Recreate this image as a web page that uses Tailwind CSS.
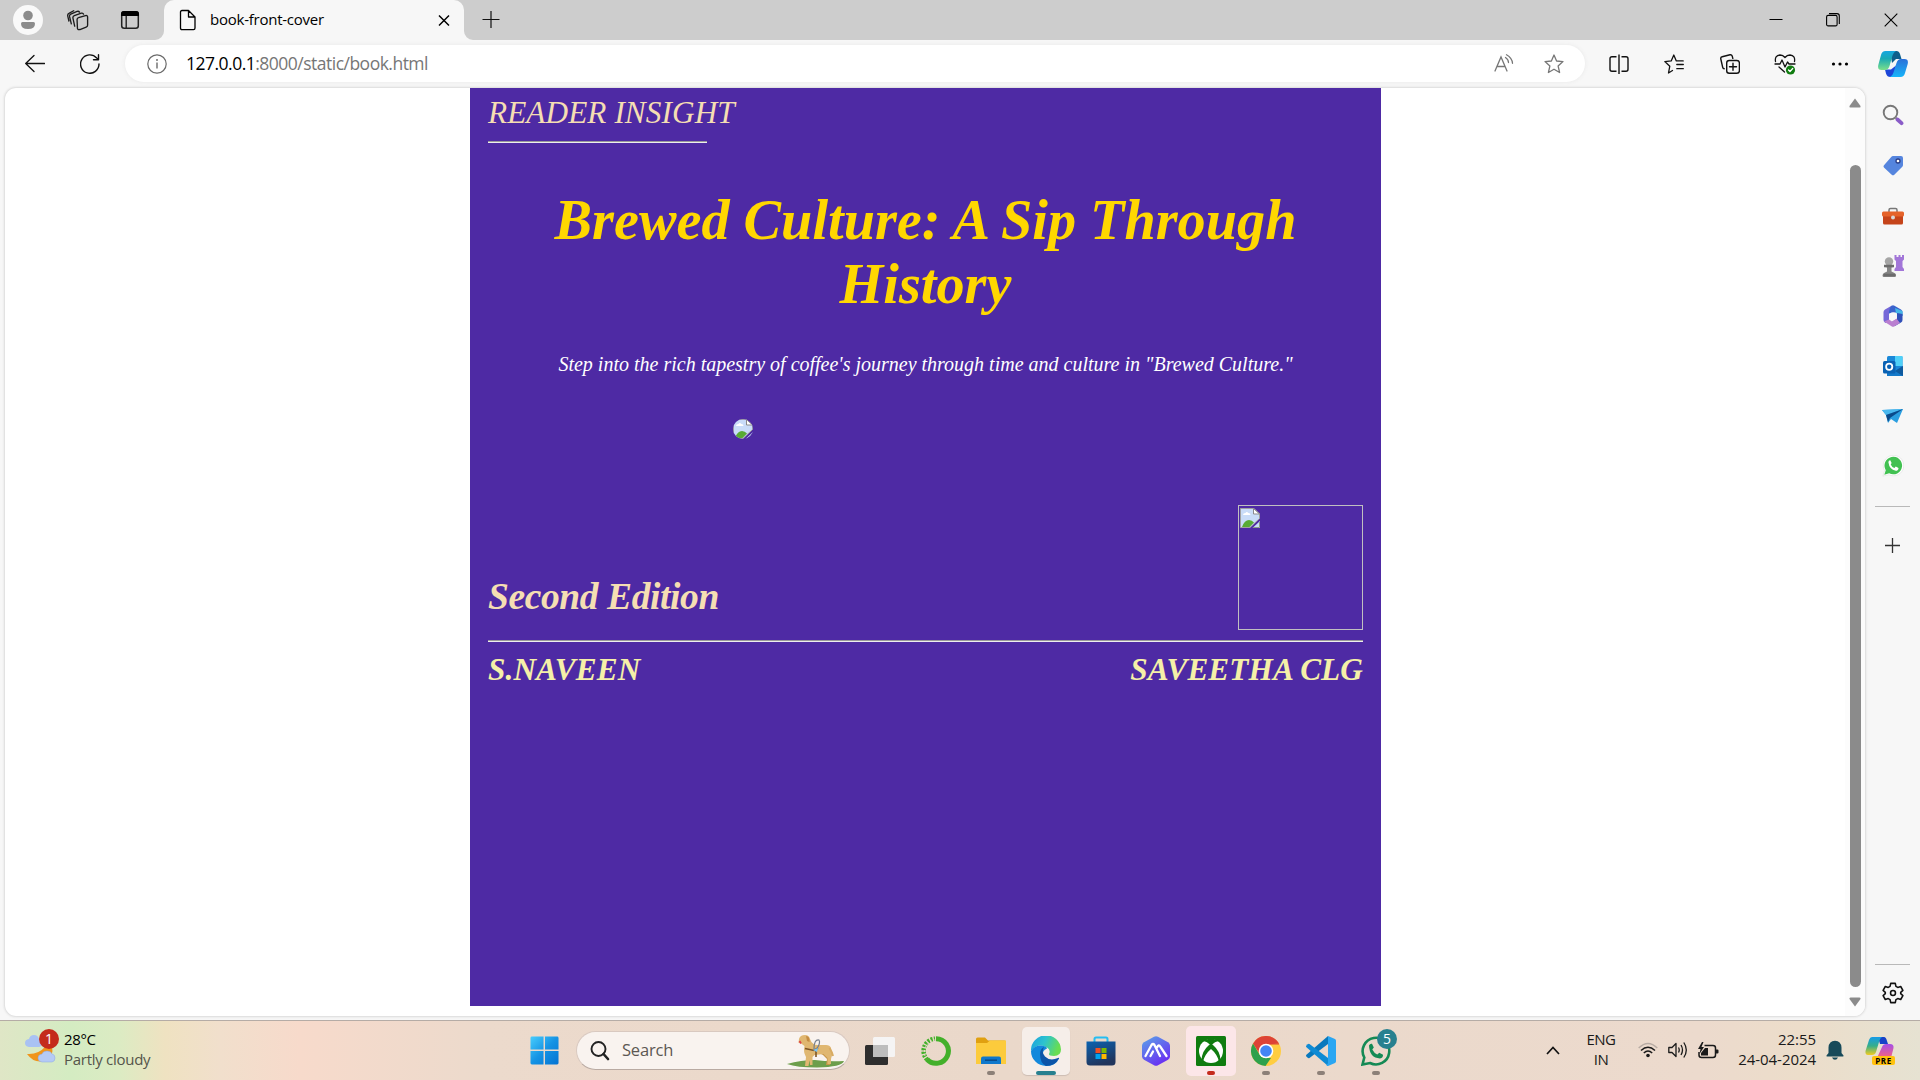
<!DOCTYPE html>
<html lang="en">
<head>
<meta charset="utf-8">
<title>book-front-cover</title>
<script src="https://cdn.jsdelivr.net/npm/@tailwindcss/browser@4"></script>
</head>
<body class="w-[1920px] h-[1080px] overflow-hidden bg-[#f7f7f7] flex flex-col font-['Open_Sans',sans-serif] text-black">

<!-- Broken image glyph shared by both missing pictures -->
<svg class="hidden">
  <symbol id="broken" viewBox="0 0 20 20">
    <path d="M0.500 0.500H14L19.500 6V10.500L10 19.500H0.500Z" fill="#c9dcf8" stroke="#a0a0a0"/>
    <path d="M3 7q0-2 2.500-2 1-2 3 0 2 0 2 2z" fill="#fff"/>
    <path d="M2 19q2.500-7 7-7 3 0 5 2.500l-4.500 4.500z" fill="#58ab34"/>
    <path d="M13.500 0.500V6H19.500Z" fill="#fff" stroke="#8b8b8b"/>
    <path d="M20 13V20H12.500Z" fill="#c9dcf8"/><path d="M13 19.500H19.500V14" fill="none" stroke="#8b9b8b"/>
  </symbol>
</svg>

<!-- Tab strip -->
<div class="h-10 bg-[#cdcdcd] flex items-end shrink-0">
  <div class="w-[164px] h-10 flex items-center">
    <svg class="ml-[13px]" width="30" height="30" viewBox="0 0 30 30"><circle cx="15" cy="15" r="15" fill="#f9f9f9"/><circle cx="15" cy="10.500" r="4.800" fill="#8c8c8c"/><path d="M8 18.500q0-1.500 1.500-1.500h11q1.500 0 1.500 1.500 0 5.500-7 5.500t-7-5.500z" fill="#8c8c8c"/></svg>
    <svg class="ml-[24px]" width="23" height="23" viewBox="0 0 24 24" fill="none" stroke="#1c1c1c" stroke-width="1.400" stroke-linejoin="round" stroke-linecap="round"><path d="M10.500 11q0-1.500 1.500-1.900l7.300-2.200q2.200-.5 2.200 1.500v8.500q0 1.500-1.500 2l-6.500 2.500q-2.200.7-2.600-1.200z"/><path d="M8 17.800 6.200 9.500q-.3-1.900 1.400-2.500l7.400-2.600q1.700-.5 2.300 1M4.500 15.500 2.700 8Q2.300 6 4 5.300L10.500 2.500q1.700-.6 2.500.8M2 12.500.8 7.500Q.4 5.300 2 4.500L7 1.800"/></svg>
    <svg class="ml-[29px]" width="22" height="22" viewBox="0 0 22 22"><rect x="2.700" y="2.700" width="16.600" height="16.600" rx="2.500" fill="none" stroke="#222" stroke-width="1.500"/><path d="M2 7V5q0-3 3-3h12q3 0 3 3v2z"/><path d="M7.200 7v12" stroke="#222" stroke-width="1.400"/></svg>
  </div>
  <div class="relative w-[300px] h-10 bg-[#f7f7f7] rounded-t-[10px] flex items-center">
    <svg class="absolute bottom-0 -left-[9px]" width="9" height="9"><path d="M9 0A9 9 0 0 1 0 9H9Z" fill="#f7f7f7"/></svg>
    <svg class="absolute bottom-0 -right-[9px]" width="9" height="9"><path d="M0 0A9 9 0 0 0 9 9H0Z" fill="#f7f7f7"/></svg>
    <svg class="ml-[15px]" width="18" height="22" viewBox="0 0 18 22" fill="none" stroke="#000" stroke-width="1.300" stroke-linejoin="round"><path d="M3 1.500h6.500L16 8v11q0 1.700-1.500 1.700H3Q1.500 20.700 1.500 19V3Q1.500 1.500 3 1.500zM9.500 1.500V8H16"/></svg>
    <span class="ml-[13px] mb-[2px] w-[220px] text-[15px] tracking-[-0.24px] leading-none">book-front-cover</span>
    <svg class="ml-[7px]" width="14" height="14" viewBox="0 0 14 14" stroke="#000" stroke-width="1.500"><path d="M2 2.500l10 10M12 2.500 2 12.500"/></svg>
  </div>
  <div class="h-10 flex items-center pl-[18px]">
    <svg width="18" height="18" viewBox="0 0 18 18" stroke="#111" stroke-width="1.200"><path d="M0.500 8.500h17M9 0v17"/></svg>
  </div>
  <div class="ml-auto h-10 flex items-center">
    <div class="w-[57px] flex justify-center"><svg width="14" height="14" stroke="#000" stroke-width="1"><path d="M0.500 6.500h13"/></svg></div>
    <div class="w-[58px] flex justify-center"><svg width="14" height="14" viewBox="0 0 14 14" fill="none" stroke="#000" stroke-width="1.100"><rect x=".6" y="2.400" width="10.500" height="10.500" rx="1.500"/><path d="M3 .6h8q2.300 0 2.300 2.300V11"/></svg></div>
    <div class="w-[58px] flex justify-center"><svg width="14" height="14" viewBox="0 0 14 14" stroke="#000" stroke-width="1.100"><path d="M.7.700l12.600 12.600M13.300.700.7 13.300"/></svg></div>
  </div>
</div>

<!-- Address bar row -->
<div class="h-12 flex items-center shrink-0 pb-px">
  <div class="w-[125px] flex items-center gap-[35px] pl-[25px]">
    <svg width="20" height="20" viewBox="0 0 20 20" fill="none" stroke="#111" stroke-width="1.300" stroke-linecap="round" stroke-linejoin="round"><path d="M19.500 9.500H.7M9 1.500.7 9.500 9 17.500"/></svg>
    <svg width="20" height="20" viewBox="0 0 20 20" fill="none" stroke="#111" stroke-width="1.400" stroke-linecap="round" stroke-linejoin="round"><path d="M19 10a9.200 9.200 0 1 1-2.300-6L18.500 5.500M18.500.700v5H13.500"/></svg>
  </div>
  <div class="w-[1460px] h-[37px] bg-white rounded-full flex items-center shadow-[0_0_4px_#e8e8e8]">
    <svg class="ml-[22px]" width="20" height="20" viewBox="0 0 20 20" fill="none" stroke="#6a6a6a" stroke-width="1.200"><circle cx="10" cy="10" r="9.200"/><path d="M10 8.500v6" stroke-width="1.400"/><circle cx="10" cy="6" r=".4"/></svg>
    <span class="ml-[19px] text-[17.5px] leading-none tracking-[-0.51px]">127.0.0.1<span class="text-[#767676]">:8000/static/book.html</span></span>
    <svg class="ml-auto" width="20" height="20" viewBox="0 0 20 20" fill="none" stroke="#767676" stroke-width="1.300" stroke-linecap="round"><path d="M1 17 7 3l6 14M3 12.500h8M11.500 3.500q3 2 3 5M12.500.800q5.500 3 6 8.500"/></svg>
    <svg class="ml-[30px] mr-[21px]" width="20" height="20" viewBox="0 0 20 20" fill="none" stroke="#767676" stroke-width="1.300" stroke-linejoin="round"><path d="M10 1l2.600 6 6.400.600-4.900 4.300 1.500 6.600L10 15.200l-5.600 3.300 1.500-6.600L1 7.600 7.400 7z"/></svg>
  </div>
  <div class="flex items-center ml-[6px]">
    <div class="w-[55px] flex justify-center"><svg width="20" height="20" viewBox="0 0 20 20" fill="none" stroke="#111" stroke-width="1.400"><path d="M7.500 2.700H3q-2 0-2 2v10.600q0 2 2 2h4.500M12.500 2.700H17q2 0 2 2v10.600q0 2-2 2h-4.500M10 .5v19.500"/></svg></div>
    <div class="w-[56px] flex justify-center"><svg width="20" height="20" viewBox="0 0 20 20" fill="none" stroke="#111" stroke-width="1.300" stroke-linejoin="round" stroke-linecap="round"><path d="M8.500 16.500 4.500 19l1.300-6.800L.8 7.600l6.400-.700L9.800 1l2.500 5.900h6.900M12.800 10.500h6.500M12.800 14.700h6.500"/></svg></div>
    <div class="w-[55px] flex justify-center"><svg width="20" height="20" viewBox="0 0 20 20" fill="none" stroke="#111" stroke-width="1.400" stroke-linejoin="round" stroke-linecap="round"><path d="M4.200 14.700q-1.200 0-1.500-1.300L.8 5Q.4 3.200 2.200 2.700L10 .8q1.700-.3 2.300 1.500l.5 2"/><rect x="6.700" y="6.500" width="12.700" height="12.700" rx="2.500"/><path d="M13 9.300v7M9.500 12.800h7"/></svg></div>
    <div class="w-[55px] flex justify-center"><svg width="22" height="22" viewBox="0 0 22 22" fill="none" stroke="#111" stroke-width="1.300" stroke-linejoin="round" stroke-linecap="round"><path d="M1.500 8.500Q.5 2.500 6 2q3 0 5 2.500Q13 2 16 2q5.500.5 4.500 6.500M1 11h5l2-4 3 7 2.500-5 1.500 2h6M5 14l5.500 5"/><circle cx="16.500" cy="17" r="4.600" fill="#107c10" stroke="none"/><path d="M14.500 17l1.500 1.500 2.700-3" stroke="#fff"/></svg></div>
    <div class="w-[55px] flex justify-center"><svg width="18" height="6"><circle cx="2.500" cy="3" r="1.600"/><circle cx="9" cy="3" r="1.600"/><circle cx="15.500" cy="3" r="1.600"/></svg></div>
    <div class="w-[52px] flex justify-center"><svg width="30" height="26" viewBox="0 0 30 26">
      <defs><linearGradient id="cA" x1="0" y1="0" x2="0" y2="1"><stop offset="0" stop-color="#15a6e0"/><stop offset=".4" stop-color="#19a9b5"/><stop offset="1" stop-color="#7be08a"/></linearGradient><linearGradient id="cB" x1="0" y1="0" x2="0" y2="1"><stop offset="0" stop-color="#2b70d8"/><stop offset="1" stop-color="#18b5fa"/></linearGradient></defs>
      <path d="M12 0h6.500Q21 0 22 3l1.500 5H18l-4 4z" fill="#0d5f8c"/>
      <path d="M7 18.500h6l5-4-2 11.500h-3.500Q9 26 8 22.500z" fill="#1d46d8"/>
      <path d="M7.500 0H18q-2.500 1-3.500 4.500L11.500 15q-1.200 4-4.500 4H3.500Q-.8 19 .3 14L3 4Q4 0 7.500 0z" fill="url(#cA)"/>
      <path d="M22.500 26H12q2.500-1 3.500-4.500L18.500 12q1.200-4 4.500-4h3.500q4.300 0 3.200 5L27 22q-1 4-4.500 4z" fill="url(#cB)"/></svg></div>
  </div>
</div>

<!-- Page area, scrollbar and side bar -->
<div class="h-[932px] flex shrink-0">
  <div class="ml-[5px] w-[1860px] h-[928px] bg-white rounded-[11px] overflow-hidden flex shadow-[0_0_3px_#bbb]">
    <main class="ml-[465px] w-[911px] h-[918px] bg-[#4e2aa4] px-[18px] font-['Liberation_Serif',serif] italic">
      <div class="h-[53px] pt-[7px] text-[31.25px] leading-[36px] tracking-[0.08px] text-[#f5deb3] whitespace-nowrap">READER INSIGHT</div>
      <div class="w-[219px] h-[2px] border-t border-t-[#9a9a9a] border-b border-b-[#eee]"></div>
      <h1 class="mt-[45px] text-center font-bold text-[56.25px] leading-[64px] text-[#ffd700]">Brewed Culture: A Sip Through<br>History</h1>
      <p class="mt-[36px] text-center text-[20px] leading-[24px] text-white whitespace-nowrap">Step into the rich tapestry of coffee's journey through time and culture in "Brewed Culture."</p>
      <div class="h-[85px] pt-[43px] pl-[245px]"><svg class="rounded-full" width="20" height="20"><use href="#broken"/></svg></div>
      <div class="h-[128px] mt-[44px] flex justify-between items-start">
        <h2 class="mt-[70px] font-bold text-[37.5px] leading-[43px] tracking-[-0.4px] text-[#f5deb3]">Second Edition</h2>
        <div class="w-[125px] h-[125px] border border-[#c0c0c0] px-px pt-[2px]"><svg width="20" height="20"><use href="#broken"/></svg></div>
      </div>
      <div class="mt-[7px] h-[2px] border-t border-t-[#9a9a9a] border-b border-b-[#eee]"></div>
      <div class="mt-[10px] flex justify-between font-bold text-[31.25px] leading-[36px] tracking-[0.12px] text-[#f5f0a8]"><span>S.NAVEEN</span><span>SAVEETHA CLG</span></div>
    </main>
    <div class="ml-auto w-[20px] bg-[#fcfcfc] flex flex-col items-center pt-[10px] pb-[9px]">
      <svg width="12" height="10"><path d="M6 .5 11.500 8q.5 1.500-1 1.500H1.500Q0 9.500.5 8Z" fill="#8b8b8b"/></svg>
      <div class="mt-[57px] w-[11px] h-[822px] rounded-full bg-[#8b8b8b]"></div>
      <svg class="mt-[10px]" width="12" height="10"><path d="M6 9.500 .5 2Q0 .5 1.500.5h9q1.500 0 1 1.500Z" fill="#8b8b8b"/></svg>
    </div>
  </div>
  <aside class="w-[55px] h-[932px] flex flex-col items-center pt-[2px]">
    <div class="h-[50px] flex items-center"><svg width="22" height="22" viewBox="0 0 22 22" fill="none"><circle cx="8.500" cy="8.500" r="6.800" stroke="#777" stroke-width="1.900"/><path d="M13.200 13.200l2 2" stroke="#888" stroke-width="2"/><path d="M15.500 15.500l4 3.700" stroke="#8a5cc8" stroke-width="3.800" stroke-linecap="round"/></svg></div>
    <div class="h-[51px] flex items-center"><svg width="20" height="22" viewBox="0 0 20 22"><path d="M10 1h8q2 0 2 2v7q0 1-.7 1.700l-8 8q-1.300 1.300-2.600 0l-7.500-7q-1.400-1.400 0-2.700l7-8Q9 1 10 1z" fill="#5585de"/><circle cx="15" cy="6" r="2" fill="#fff" stroke="#2c3e86" stroke-width="1.300"/></svg></div>
    <div class="h-[50px] flex items-center"><svg width="22" height="18" viewBox="0 0 22 18"><path d="M7 5V3q0-1.500 1.500-1.500h5Q15 1.500 15 3v2" fill="none" stroke="#777" stroke-width="1.500"/><rect x="1" y="7" width="20" height="10.500" rx="1.500" fill="#c5441a"/><rect x="0" y="4.500" width="22" height="5" rx="1.500" fill="#e5632a"/><circle cx="11" cy="10.500" r="2" fill="#d8d8d8"/></svg></div>
    <div class="h-[50px] flex items-center"><svg width="22" height="24" viewBox="0 0 22 24"><path d="M12.500 1h2v2h2V1h2v2h1.500V1H22v4.500l-1.500 1.500v6l1.500 2v2H12.500v-2L14 13V7l-1.500-1.500z" fill="#a276d8"/><circle cx="7" cy="7.500" r="4.200" fill="#a5a5a5"/><path d="M3 11h8.500v2l-2 .500v4l3 1.500q1.500 1 1.500 2.500t-1.500 1.500H2Q.5 23 .5 21.500T2 19l3-1.500v-4l-2-.5z" fill="#858585"/><path d="M2 12h10M1.500 21h12" stroke="#6c6c6c" stroke-width="2.300"/></svg></div>
    <div class="h-[50px] flex items-center"><svg width="20" height="22" viewBox="0 0 20 22"><path d="M8.500.8 2 4.500Q.5 5.500.5 7v8q0 2 2 3l3.500-2V8l7-4z" fill="#7568d8"/><path d="M8.500.8q1.500-1 3 0L18 4.500q1.500 1 1.500 2.500v4L13 7.500 6 8.500q-.5-5 2.500-7.700z" fill="#3a63cc"/><path d="M12 3l7.500 3v5L13 8z" fill="#45b8e8"/><path d="M19.500 9v6q0 1.500-1.500 2.500l-6.500 3.700L9 17l5-3V8z" fill="#3150b8"/><path d="M1 16.500l7.500 4.700q1.500 1 3 0L17 18l-3.500-4.500-4.500 3-3-2z" fill="#ba7fd0"/><circle cx="10" cy="11" r="3.700" fill="#f7f7f7"/></svg></div>
    <div class="h-[50px] flex items-center"><svg width="20" height="20" viewBox="0 0 20 20"><rect x="4" y="0" width="15.500" height="16" rx="1.500" fill="#1a88d8"/><path d="M12 0h7.500v10H12z" fill="#4fd0f8"/><path d="M4 20V10l8 5 8-5v10z" fill="#1479c9"/><path d="M20 10v10l-8-5z" fill="#0e5a9e"/><rect x="0" y="5" width="12.500" height="12.500" rx="1.500" fill="#0a62b4"/><circle cx="6.200" cy="10.700" r="3.100" fill="none" stroke="#fff" stroke-width="1.800"/></svg></div>
    <div class="h-[50px] flex items-center"><svg width="21" height="16" viewBox="0 0 21 16"><path d="M0 2 21 1 15 15 9 11l-3 4-2-8z" fill="#2a9ee0"/><path d="M21 1 4 7 0 2z" fill="#4ab8ee"/><path d="M4 7 21 1 8 10l-2 4z" fill="#0b4a8a"/></svg></div>
    <div class="h-[50px] flex items-center"><svg width="22" height="22" viewBox="0 0 24 24"><path d="M1 23l1.800-6A11.200 11.200 0 1 1 7.500 21.500z" fill="#fff" stroke="#ddd" stroke-width=".6"/><path d="M2.500 21.500l1.600-5A9.600 9.600 0 1 1 7.800 20z" fill="#42c152"/><path d="M7 8q0-2 2-2.200l1.500 3-1 1.500q1.200 2.800 4 4l1.500-1.700 3 1.500q0 3-3 3.200Q8 16 7 8z" fill="#fff"/></svg></div>
    <div class="mt-[15px] w-[35px] h-px bg-[#b9b9b9]"></div>
    <svg class="mt-[31px]" width="15" height="15" stroke="#333" stroke-width="1.300"><path d="M0 7.500h15M7.500 0v15"/></svg>
    <div class="mt-auto w-[35px] h-px bg-[#b9b9b9]"></div>
    <svg class="mt-[17px] mb-[16px]" width="22" height="22" viewBox="0 0 24 24" fill="none" stroke="#111" stroke-width="1.700" stroke-linejoin="round"><circle cx="12" cy="12" r="2.700"/><path d="M9.500 1.500h5l.7 3.200 2 1.200 3.200-1 2.400 4.200-2.400 2.200v1.400l2.400 2.200-2.400 4.200-3.200-1-2 1.200-.7 3.200h-5l-.7-3.200-2-1.200-3.200 1-2.400-4.200 2.400-2.200v-1.400L1.200 9.100l2.400-4.200 3.200 1 2-1.200z"/></svg>
  </aside>
</div>

<!-- Taskbar -->
<div class="h-[60px] shrink-0 border-t border-[#b5aca6] flex items-center bg-[linear-gradient(90deg,#dfe6c6_0px,#d4ecc2_70px,#dcebc3_120px,#efe2c1_165px,#f1dfcc_220px,#f7dacb_300px,#ecdacc_480px,#ead8ca_1000px,#ecdacd_1700px,#ecddca_1800px,#e6e2d2_1920px)]">
  <div class="w-[529px] flex items-center pb-[3px]">
    <div class="relative ml-[25px] w-[39px] h-[40px]">
      <svg width="34" height="40" viewBox="0 0 34 40"><path d="M2 25q11 1 19-8l6 1q2 8-5 13-12 5-20-6z" fill="#f0951c"/><path d="M4 18q-4-.5-4-4t4-4q1-4 5-4t5 4q3 .5 3 4t-3 4z" fill="#a9c2f3"/><path d="M17 33q-4-.5-4-4t4-4q1-3 5-3t5 3q3 .5 3 4t-3 4z" fill="#b5caf5" stroke="#8ba9e5" stroke-width=".5"/></svg>
      <span class="absolute left-[14px] top-0 w-5 h-5 rounded-full bg-[#c42b1c] text-white text-[14px] leading-5 text-center">1</span>
    </div>
    <div class="leading-5 tracking-[-0.35px] text-[15px]"><div>28°C</div><div class="text-[#55554b] tracking-[-0.28px]">Partly cloudy</div></div>
  </div>
  <svg class="ml-px" width="29" height="29" viewBox="0 0 30 30"><defs><linearGradient id="w" x1="0" y1="0" x2="1" y2="1"><stop offset="0" stop-color="#48cdfd"/><stop offset=".5" stop-color="#1593e4"/><stop offset="1" stop-color="#0473d2"/></linearGradient></defs><path d="M2 .5H14V14H.5V2Q.5.500 2 .5zM15.500.500H28q1.500 0 1.500 1.500V14h-14zM.5 15.500H14v14H2Q.5 29.500.5 28zM15.500 15.500h14V28q0 1.500-1.500 1.500H15.500z" fill="url(#w)"/></svg>
  <div class="ml-[17px] w-[274px] h-[39px] rounded-full bg-[#f9f3ef] border border-[#d9c9c0] border-b-[#b9aaa2] flex items-center">
    <svg class="ml-[13px]" width="20" height="20" viewBox="0 0 20 20" fill="none" stroke="#222"><circle cx="8.500" cy="8" r="7" stroke-width="1.900"/><path d="M13.500 13l4.500 5" stroke-width="2.600" stroke-linecap="round"/></svg>
    <span class="ml-[12px] text-[16.5px] tracking-[-0.2px] text-[#5d5853]">Search</span>
    <svg class="ml-auto mr-[5px]" width="57" height="36" viewBox="0 0 57 36"><path d="M0 31q14-4 28-4 14 2 29 1-2 6-27 6.500Q10 34.500 0 31z" fill="#6d9e4b"/><path d="M32 20l7-6 6 6-2 12h-4l1-6-4-4z" fill="#c89648"/><path d="M12 6q1-4 6-4 4 0 5 4 2 6 8 6l8 0q4 0 5 3l1 6-1 3 0 7h-3.500v-6l-4-4-9 1-2 2v8h-2.500l-.5-5-1 6h-3.500l1-9q-3-5-1.500-11l-4-3h-2z" fill="#e0b771"/><path d="M19 3q4 0 3.500 6l-2.500-1z" fill="#c48c42"/><path d="M42.500 15q3 5 3.500 8" stroke="#d8ab62" stroke-width="2" fill="none"/><path d="M12.500 8l1.500 2.500" stroke="#e0434a" stroke-width="1.800"/><path d="M18 15.500l9 2 4-2.500M29 16v8" stroke="#7d5526" stroke-width="1.600" fill="none"/><path d="M27 16q0-10 5-9 2 3-3 10z" fill="none" stroke="#777f8c" stroke-width="1.200"/><path d="M26 17l5-2-1 4z" fill="#79c4f5"/></svg>
  </div>
  <div class="ml-[2px] flex items-center h-[60px]">
    <div class="w-[56px] flex justify-center"><svg width="32" height="30" viewBox="0 0 32 30"><rect x="1" y="9" width="23" height="20" rx="1.500" fill="#2e2e2e"/><rect x="9" y="1" width="22" height="20" rx="1.500" fill="#f6f6f6" fill-opacity=".95"/><path d="M9 9h15v12H9z" fill="#bdbdbd"/></svg></div>
    <div class="w-[55px] flex justify-center"><svg width="30" height="30" viewBox="0 0 30 30" fill="none" stroke="#43b02a"><path d="M15 2.700A12.300 12.300 0 1 1 6 23.300" stroke-width="5"/><path d="M6 23.500A12.300 12.300 0 0 1 14 2.700" stroke-width="4.500" stroke-dasharray="2 1.300"/><path d="M4 20A12.300 12.300 0 0 1 14 4" stroke="#ecdacc" stroke-width="1" stroke-dasharray="2 2"/></svg></div>
    <div class="relative w-[55px] h-[60px] flex justify-center items-center"><svg width="30" height="28" viewBox="0 0 30 28"><path d="M0 2Q0 .500 1.500.500H9L12 3.500H28.500q1.500 0 1.500 1.500V8H0z" fill="#e0a010"/><path d="M0 6h11l3-2.500h16V27H0z" fill="#fccb3c"/><path d="M5 27v-5.500Q5 19.500 7 19.500H23q2 0 2 2V27z" fill="#0f78cc"/><path d="M9 23.200h12" stroke="#0a4a88" stroke-width="1.500"/></svg><span class="absolute bottom-[6px] w-2 h-1 rounded-full bg-[#8c8078]"></span></div>
    <div class="relative w-[55px] h-[60px] flex justify-center items-center"><div class="w-12 h-12 rounded-[5px] bg-[#f6eee9] shadow-[0_1px_1px_#cdbdb3] flex justify-center items-center"><svg width="30" height="30" viewBox="0 0 30 30"><defs><linearGradient id="e1" x1="0" y1="0" x2="1" y2=".3"><stop offset="0" stop-color="#1b9ee0"/><stop offset=".5" stop-color="#2dc3cf"/><stop offset="1" stop-color="#68dd51"/></linearGradient></defs><path d="M0 15A15 15 0 0 1 30 13.500Q30 20 23 20q-5.500 0-5-2 2-4-2-6.500Q7 6 0 15z" fill="url(#e1)"/><path d="M0 15Q4 9 10 9.500q6 .5 6 3-5 2-4 7 2 7 9 7 4 0 6-2-4 5.500-12 5.500A15 15 0 0 1 0 15z" fill="#1388dc"/><path d="M9 18q0-5 4-7-3 5 1 9.500 5 5 13 1.500 1.500-.5 1 .7-4 7.300-13 7.300Q9 27 9 18z" fill="#0d55a8"/></svg></div><span class="absolute bottom-[6px] w-5 h-1 rounded-full bg-[#28808f]"></span></div>
    <div class="w-[55px] flex justify-center"><svg width="30" height="30" viewBox="0 0 30 30"><defs><linearGradient id="st" x1="0" y1="0" x2=".4" y2="1"><stop offset="0" stop-color="#0b62b0"/><stop offset="1" stop-color="#21355c"/></linearGradient></defs><path d="M8.500 7V3q0-1.500 1.500-1.500H20q1.500 0 1.500 1.500v4" fill="none" stroke="#25bdf2" stroke-width="2"/><path d="M.5 5.500h29V26q0 3.500-3.500 3.500H4Q.5 29.500.5 26z" fill="url(#st)"/><path d="M9.500 12h5v5h-5z" fill="#f25022"/><path d="M15.500 12h5v5h-5z" fill="#7fba00"/><path d="M9.500 18h5v5h-5z" fill="#00a4ef"/><path d="M15.500 18h5v5h-5z" fill="#ffb900"/></svg></div>
    <div class="w-[55px] flex justify-center"><svg width="28" height="30" viewBox="0 0 28 30"><defs><linearGradient id="ai" x1="0" y1="0" x2=".6" y2="1"><stop offset="0" stop-color="#5aa5e8"/><stop offset="1" stop-color="#6a30f2"/></linearGradient></defs><path d="M12 .800q2-1 4 0l10 5.500q2 1.200 2 3.200v11q0 2-2 3.200l-10 5.500q-2 1-4 0L2 23.700Q0 22.500 0 20.500v-11Q0 7.500 2 6.300z" fill="url(#ai)"/><path d="M3.500 20 9.500 9q1.500-2 3 0L18 20M8.500 20l2.500-4.500M15 11.500q1.700-4 3.500-.5L24.500 20" fill="none" stroke="#fff" stroke-width="2.300" stroke-linecap="round"/></svg></div>
    <div class="relative w-[55px] h-[60px] flex justify-center items-center"><div class="w-[50px] h-[50px] rounded-[5px] bg-[#fce6e8] flex justify-center items-center"><svg width="30" height="30" viewBox="0 0 30 30"><rect width="30" height="30" rx="1.500" fill="#107c10"/><circle cx="15" cy="15" r="12" fill="#fff"/><path d="M8 5q3-.5 7 2.500Q19 4.500 22 5L15 1.500z" fill="#107c10"/><path d="M6 5.500q4-1 9 4.300Q20 4.500 24 5.500L22 3q-3 0-7 2.800Q11 3 8 3z" fill="#107c10"/><path d="M12.500 9.500Q6 15 5.500 24l1.500 1.500Q9 18 15 13q6 5 8 12.500l1.500-1.500Q24 15 17.500 9.500L15 7.500z" fill="#107c10"/></svg></div><span class="absolute bottom-[6px] w-2 h-1 rounded-full bg-[#c42b1c]"></span></div>
    <div class="relative w-[55px] h-[60px] flex justify-center items-center"><svg width="30" height="30" viewBox="0 0 30 30"><circle cx="15" cy="15" r="15" fill="#ffcd40"/><path d="M2 7.500A15 15 0 0 1 28 7.500L15 8.500 9 18.500z" fill="#dd4336"/><path d="M2 7.500l6.500 11Q11 22 15 22h5L14.500 30A15 15 0 0 1 2 7.500z" fill="#2da14c"/><path d="M15 8h13" stroke="#dd4336" stroke-width="1"/><circle cx="15" cy="15" r="7.300" fill="#fff"/><circle cx="15" cy="15" r="5.800" fill="#4285f4"/></svg><span class="absolute bottom-[6px] w-2 h-1 rounded-full bg-[#8c8078]"></span></div>
    <div class="relative w-[55px] h-[60px] flex justify-center items-center"><svg width="30" height="30" viewBox="0 0 30 30"><path d="M22 0v8L3.500 22q-1 .5-1.800-.2L.4 20.500q-.8-1 0-1.800z" fill="#0878bd"/><path d="M22 30v-8L3.500 8q-1-.5-1.800.2L.4 9.500q-.8 1 0 1.800z" fill="#0e8ad4"/><path d="M22 0l7 3q1 .5 1 1.700v20.600q0 1.200-1 1.700l-7 3q-1 .2-1.500-.5L22 27z" fill="#2aa6f2"/></svg><span class="absolute bottom-[6px] w-2 h-1 rounded-full bg-[#8c8078]"></span></div>
    <div class="relative w-[55px] h-[60px] flex justify-center items-center"><svg width="30" height="30" viewBox="0 0 30 30"><path d="M1.500 28.500l1.800-7A13.300 13.300 0 1 1 9 27z" fill="none" stroke="#158a55" stroke-width="2.600"/><path d="M8 9.500Q9 7.300 11 7.800l1.800 3.700-1.500 2q1.700 3.500 5 5l2-1.800 3.700 2q.3 3-3 3.700Q8.500 22 8 9.500z" fill="#158a55"/></svg><span class="absolute left-[29px] top-[8px] w-5 h-5 rounded-full bg-[#28808f] text-white text-[14px] leading-5 text-center">5</span><span class="absolute bottom-[6px] w-2 h-1 rounded-full bg-[#8c8078]"></span></div>
  </div>
  <div class="ml-auto flex items-center text-[15px] leading-5 text-[#1a1a1a] pb-px">
    <svg width="14" height="9" fill="none" stroke="#111" stroke-width="1.700"><path d="M1 8l6-6.500L13 8"/></svg>
    <div class="ml-[24px] pb-[2px] w-[34px] text-center tracking-[-0.5px]">ENG<br>IN</div>
    <svg class="ml-[20px]" width="20" height="16" viewBox="0 0 20 16" fill="none" stroke="#1a1a1a" stroke-width="1.500"><path d="M.7 6Q10-3 19.300 6" stroke="#b8aca4"/><path d="M3 8.500q7-6.500 14 0M5.800 11q4.200-4 8.400 0"/><circle cx="10" cy="13.500" r="1.800" fill="#1a1a1a" stroke="none"/></svg>
    <svg class="ml-[10px]" width="20" height="18" viewBox="0 0 20 18" fill="none" stroke="#1a1a1a" stroke-width="1.300" stroke-linejoin="round"><path d="M.8 6.500H4l4-4v13l-4-4H.8zM10.500 6.500q1.500 2.500 0 5M13 4q3 5 0 10M15.800 1.500q5 7.500 0 15"/></svg>
    <svg class="ml-[10px]" width="21" height="17" viewBox="0 0 21 17"><path d="M6.500 3.500H15q2.500 0 2.500 2.500v7q0 2.500-2.500 2.500H3.500Q1 15.500 1 13v-3" fill="none" stroke="#1a1a1a" stroke-width="1.500"/><path d="M3 13.500V11l4-5h3v7.500zM18 7.500h1.500q1 0 1 1v2q0 1-1 1H18zM4 0 0 7h2.500L1.500 12 6 5H3.500L5.500 0z" fill="#1a1a1a"/></svg>
    <div class="ml-[17px] pb-[2px] w-[80px] text-right whitespace-nowrap tracking-[-0.05px]">22:55<br>24-04-2024</div>
    <svg class="ml-[10px]" width="18" height="20" viewBox="0 0 18 20"><path d="M2.500 13V7.500Q3 .700 9 .700t6.500 6.800V13l2 2.500q.3 1-.5 1H1q-.8 0-.5-1zM6 17.500h6q-1 2.200-3 2.200t-3-2.200z" fill="#174a5a"/></svg>
    <div class="relative ml-[21px] mr-[25px] w-[30px] h-[30px]"><svg width="30" height="30" viewBox="0 0 30 30"><defs><linearGradient id="p1" x1="0" y1="0" x2="0" y2="1"><stop offset="0" stop-color="#159be8"/><stop offset=".5" stop-color="#36ae8a"/><stop offset="1" stop-color="#f2cc20"/></linearGradient><linearGradient id="p2" x1="0" y1="0" x2="0" y2="1"><stop offset="0" stop-color="#a64ee8"/><stop offset="1" stop-color="#f7647c"/></linearGradient></defs><path d="M13 2h6q2 0 3 4l1 3h-8z" fill="#1842c8"/><path d="M7 2h10q-2 1-3 5l-3 10q-1 3-4 3H3q-3 0-2.500-4L4 5q1-3 3-3z" fill="url(#p1)"/><path d="M12 23l5-11q1-3 4-3h4q4 0 3.500 4L26 23z" fill="url(#p2)"/></svg><span class="absolute left-[7px] top-[21px] w-[23px] h-[9px] rounded-[2px] bg-[#ffc20e] text-[8px] leading-[9px] font-bold tracking-[0.6px] text-center text-black">PRE</span></div>
  </div>
</div>
</body>
</html>
